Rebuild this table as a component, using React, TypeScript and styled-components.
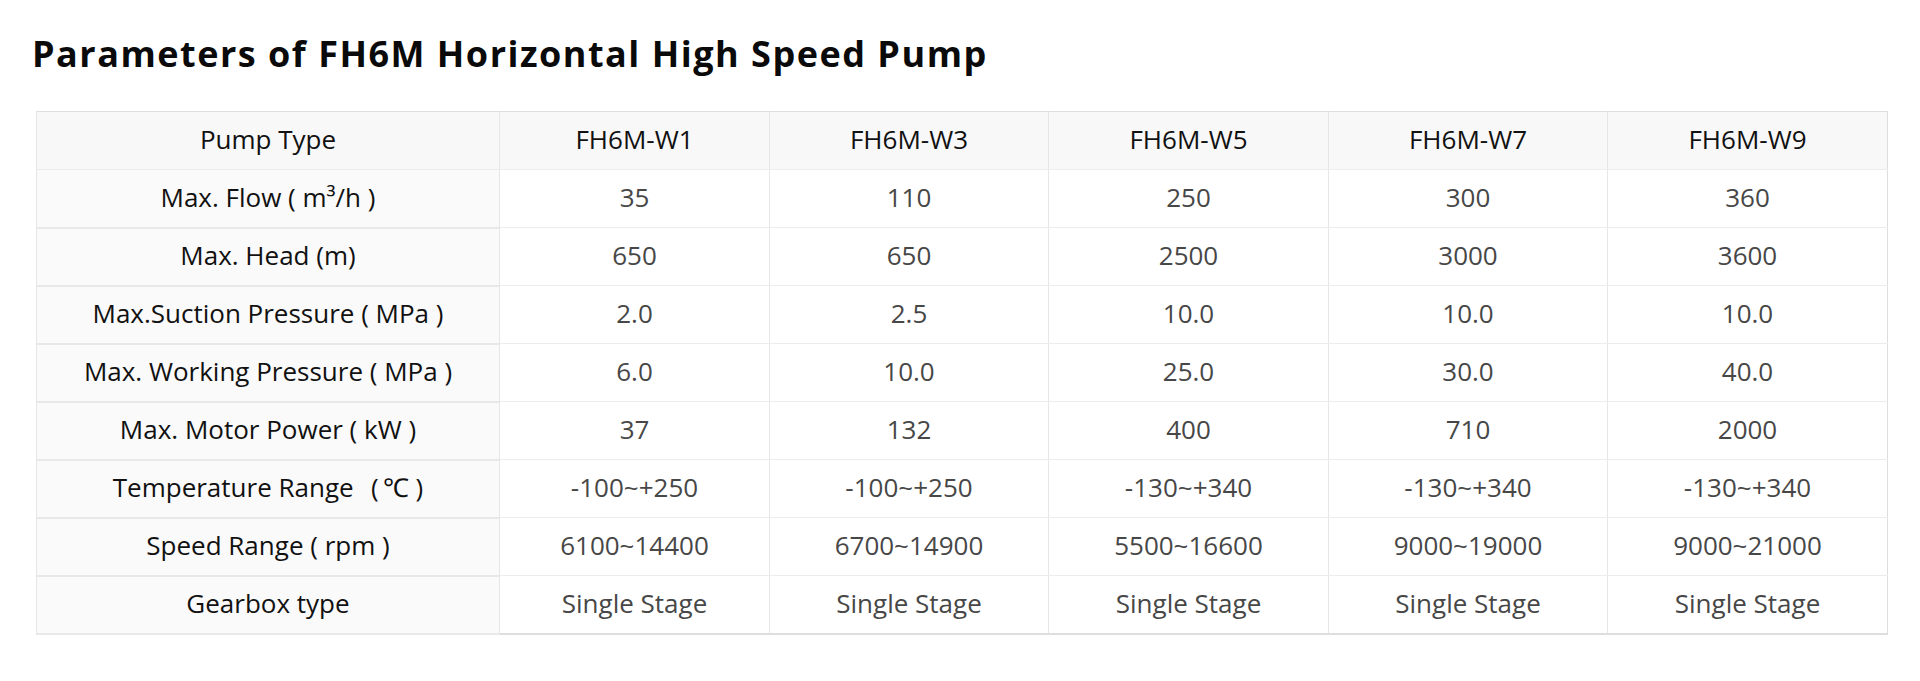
import React from "react";
import styled, { createGlobalStyle } from "styled-components";

const Global = createGlobalStyle`
  html, body { margin: 0; padding: 0; background: #ffffff; }
  body { font-family: "Open Sans", "Noto Sans", Arial, sans-serif; }
`;

const Page = styled.div`
  padding: 34px 33px 40px 36px;
`;

const Title = styled.h2`
  margin: 0 0 37px -4px;
  font-family: "Open Sans", "Noto Sans", Arial, sans-serif;
  font-weight: 700;
  font-size: 36px;
  line-height: 40px;
  color: #0a0a0a;
  letter-spacing: 1.5px;
`;

const Table = styled.table`
  width: 1851px;
  table-layout: fixed;
  border-collapse: collapse;
  border: 1px solid #dedede;
  border-bottom-width: 2px;
`;

const Row = styled.tr`
  height: 58px;
`;

const Cell = styled.td<{ $head?: boolean; $label?: boolean }>`
  padding: 0 4px 3px;
  text-align: center;
  vertical-align: middle;
  font-family: "Open Sans", "Noto Sans", Arial, sans-serif;
  font-size: 26px;
  line-height: 32px;
  white-space: nowrap;
  color: ${(p) => (p.$head || p.$label ? "#111111" : "#474747")};
  background: ${(p) => (p.$head ? "#f8f8f8" : p.$label ? "#fafafa" : "#ffffff")};
  border-left: 1px solid #e6e6e6;
  border-bottom: ${(p) => (p.$label ? "2px solid #e8e8e8" : "1px solid #ececec")};
`;

const widths = [463, 270, 279, 280, 279, 280];

const header = ["Pump Type", "FH6M-W1", "FH6M-W3", "FH6M-W5", "FH6M-W7", "FH6M-W9"];

const rows: string[][] = [
  ["Max. Flow ( m³/h )", "35", "110", "250", "300", "360"],
  ["Max. Head (m)", "650", "650", "2500", "3000", "3600"],
  ["Max.Suction Pressure ( MPa )", "2.0", "2.5", "10.0", "10.0", "10.0"],
  ["Max. Working Pressure ( MPa )", "6.0", "10.0", "25.0", "30.0", "40.0"],
  ["Max. Motor Power ( kW )", "37", "132", "400", "710", "2000"],
  ["Temperature Range\u2002\u2009(\u2009℃ )", "-100~+250", "-100~+250", "-130~+340", "-130~+340", "-130~+340"],
  ["Speed Range ( rpm )", "6100~14400", "6700~14900", "5500~16600", "9000~19000", "9000~21000"],
  ["Gearbox type", "Single Stage", "Single Stage", "Single Stage", "Single Stage", "Single Stage"],
];

export default function App() {
  return (
    <Page>
      <Global />
      <Title>Parameters of FH6M Horizontal High Speed Pump</Title>
      <Table>
        <colgroup>
          {widths.map((w, i) => (
            <col key={i} style={{ width: w }} />
          ))}
        </colgroup>
        <tbody>
          <Row>
            {header.map((h, i) => (
              <Cell key={i} $head>
                {h}
              </Cell>
            ))}
          </Row>
          {rows.map((r, ri) => (
            <Row key={ri}>
              {r.map((c, ci) => (
                <Cell key={ci} $label={ci === 0}>
                  {c}
                </Cell>
              ))}
            </Row>
          ))}
        </tbody>
      </Table>
    </Page>
  );
}
